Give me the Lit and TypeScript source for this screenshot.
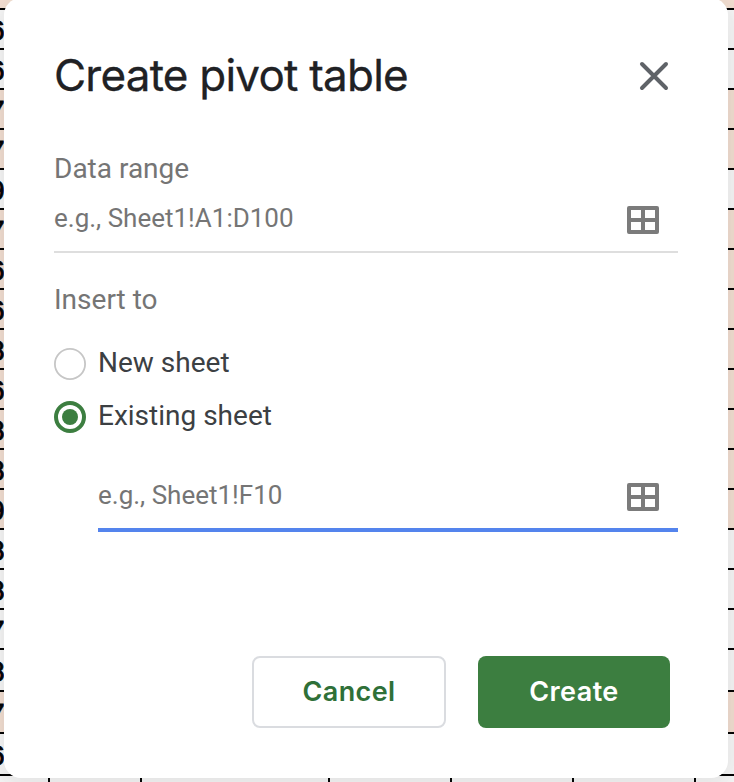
import { LitElement, html, svg, css } from "lit";
import { customElement, property } from "lit/decorators.js";
import { classMap } from "lit/directives/class-map.js";

interface Row { value: string; tinted: boolean; height: number; }

const row = (value: string, tinted: boolean, height = 40): Row => ({ value, tinted, height });

const rows: Row[] = [
  row("", true, 10), row("6", false), row("6", false), row("7", true), row("7", true),
  row("9", false), row("7", true), row("6", true), row("6", true), row("8", true),
  row("6", true), row("8", true), row("8", true), row("9", true), row("8", false),
  row("8", false), row("7", false), row("8", false, 42), row("7", true, 42), row("6", false, 42),
];

const columnWidths = [50, 92, 188, 122, 122, 122];

@customElement("sheet-grid")
class SheetGrid extends LitElement {
  static styles = css`
    :host { display: block; background: #fff; font: 400 27px/38px "Liberation Sans", Arial, sans-serif; color: #000; -webkit-text-stroke: 0.9px #000; }
    .row { box-sizing: border-box; border-bottom: 2px solid #000; }
    .tinted { background: #fbe6d8; }
    .value { width: 4.5px; height: 100%; display: flex; align-items: center; justify-content: flex-end; padding-top: 3px; box-sizing: border-box; }
    .footer { display: flex; height: 6px; }
    .cell { box-sizing: border-box; border-right: 2px solid #000; }
  `;
  render() {
    return html`
      ${rows.map(r => html`<div class=${classMap({ row: true, tinted: r.tinted })} style="height:${r.height}px">
        <div class="value">${r.value}</div></div>`)}
      <div class="footer">${columnWidths.map(w => html`<div class="cell" style="width:${w}px"></div>`)}</div>`;
  }
}

@customElement("range-field")
class RangeField extends LitElement {
  @property() hint = "";
  @property({ type: Boolean, reflect: true }) active = false;
  static styles = css`
    :host { display: flex; justify-content: space-between; align-items: center; box-sizing: border-box; height: 67px; padding: 0 18px 0 0; border-bottom: 2px solid #dedede; }
    :host([active]) { height: 70px; border-bottom: 4px solid #5484ed; }
    .hint { font-size: 26px; line-height: 30px; color: #757575; white-space: nowrap; }
    :host(:not([active])) .hint { margin-top: -2px; }
    svg { display: block; margin-top: 3px; }
  `;
  render() {
    return html`<span class="hint">${this.hint}</span>
      <svg width="34" height="30" viewBox="0 0 34 30">${svg`<path fill="#7b7b7b" fill-rule="evenodd" d="M3 1H31Q33 1 33 3V27Q33 29 31 29H3Q1 29 1 27V3Q1 1 3 1ZM5 5V13H15V5ZM19 5V13H29V5ZM5 17V25H15V17ZM19 17V25H29V17Z"/>`}</svg>`;
  }
}

@customElement("app-root")
class AppRoot extends LitElement {
  static styles = css`
    :host { display: block; position: relative; width: 734px; height: 782px; overflow: hidden; font-family: Roboto, sans-serif; }
    .dialog { position: absolute; left: 4px; top: -2px; width: 724px; height: 780px; box-sizing: border-box; padding: 50px; border-radius: 17px; background: #fff; display: flex; flex-direction: column;
      box-shadow: 0 8px 24px 8px rgba(60,64,67,.08), 0 0 60px 20px rgba(40,40,40,.07); }
    .header { display: flex; justify-content: space-between; height: 56px; padding-right: 9px; align-items: center; }
    h1 { margin: -2px 0 0; font: 400 44px/56px Inter, sans-serif; letter-spacing: -0.78px; color: #202124; white-space: nowrap; -webkit-text-stroke: 0.3px #202124; }
    .caption { font-size: 28px; line-height: 34px; color: #757575; }
    .data { margin-top: 48px; }
    .insert { margin-top: 30px; }
    .option { display: flex; align-items: center; gap: 12px; height: 33px; font-size: 28px; line-height: 33px; color: #3c4043; }
    .first { margin-top: 29px; }
    .second { margin-top: 20px; }
    .option svg { margin-top: 2px; }
    .target { margin: 30px 0 0 44px; }
    .actions { display: flex; justify-content: flex-end; gap: 32px; margin-top: 124px; padding-right: 8px; }
    button { box-sizing: border-box; height: 72px; padding: 0; border-radius: 8px; font: 600 27px/32px Inter, sans-serif; letter-spacing: 0.4px; }
    .cancel { width: 194px; border: 2px solid #dadce0; background: #fff; color: #2f7038; }
    .create { width: 192px; border: 0; background: #3c7e40; color: #fff; }
  `;
  render() {
    return html`
      <sheet-grid></sheet-grid>
      <div class="dialog">
        <div class="header"><h1>Create pivot table</h1>
          <svg width="30" height="30" viewBox="0 0 30 30"><path d="M3 3L27 27M27 3L3 27" fill="none" stroke="#5f6368" stroke-width="4" stroke-linecap="round"/></svg>
        </div>
        <div class="caption data">Data range</div>
        <range-field hint="e.g., Sheet1!A1:D100"></range-field>
        <div class="caption insert">Insert to</div>
        <div class="option first"><svg width="32" height="32"><circle cx="16" cy="16" r="15.1" fill="none" stroke="#c6c6c6" stroke-width="1.8"/></svg><span>New sheet</span></div>
        <div class="option second"><svg width="32" height="32"><circle cx="16" cy="16" r="14" fill="none" stroke="#3c7e40" stroke-width="4"/><circle cx="16" cy="16" r="8" fill="#3c7e40"/></svg><span>Existing sheet</span></div>
        <range-field class="target" active hint="e.g., Sheet1!F10"></range-field>
        <div class="actions"><button class="cancel">Cancel</button><button class="create">Create</button></div>
      </div>`;
  }
}
